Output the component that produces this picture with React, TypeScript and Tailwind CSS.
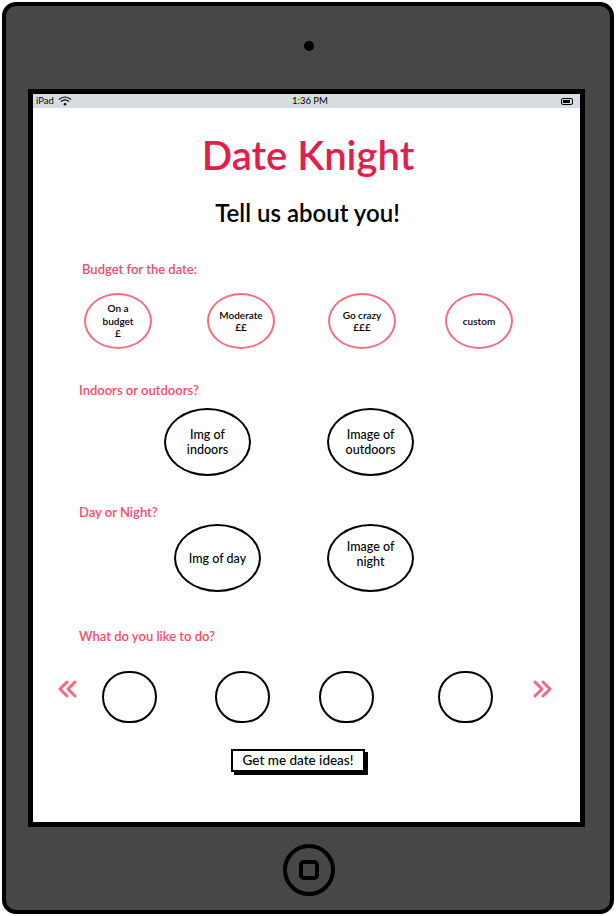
import React from "react";

const font = { fontFamily: "Lato, 'Noto Sans', sans-serif" };

function PinkEllipse({ ml, children }: { ml: string; children: React.ReactNode }) {
  return (
    <div
      className={`${ml} w-[68px] h-[56px] rounded-[50%] border-2 border-[#f2707f] flex items-center justify-center text-center text-[10px] leading-[12.5px] font-semibold text-black shrink-0`}
    >
      {children}
    </div>
  );
}

function BlackEllipse({ ml, children }: { ml: string; children: React.ReactNode }) {
  return (
    <div
      className={`${ml} w-[87px] h-[68px] rounded-[50%] border-2 border-black flex items-center justify-center text-center text-[12.5px] leading-[15px] font-medium text-black shrink-0`}
    >
      {children}
    </div>
  );
}

function Circle({ ml }: { ml: string }) {
  return <div className={`${ml} w-[55px] h-[52px] rounded-full border-2 border-black shrink-0`} />;
}

function Chevrons({ dir }: { dir: "left" | "right" }) {
  const d =
    dir === "left"
      ? "M10 2 L3 9 L10 16 M18 2 L11 9 L18 16"
      : "M2 2 L9 9 L2 16 M10 2 L17 9 L10 16";
  return (
    <svg width="20" height="18" viewBox="0 0 20 18" className="shrink-0">
      <path d={d} fill="none" stroke="#f2687f" strokeWidth="3" strokeLinecap="round" strokeLinejoin="round" />
    </svg>
  );
}

export default function App() {
  return (
    <div className="w-[616px] h-[916px] bg-white overflow-hidden" style={font}>
      <div className="ml-[2px] mt-[2px] w-[612px] h-[912px] rounded-[14px] border-4 border-black bg-[#474747] flex flex-col">
        {/* camera */}
        <div className="self-center ml-[2px] mt-[35px] w-[10px] h-[10px] rounded-full bg-black" />
        {/* screen */}
        <div className="ml-[22px] mt-[38px] w-[557px] h-[738px] border-[5px] border-black bg-white flex flex-col">
          {/* status bar */}
          <div className="h-[14px] bg-[#d6dde0] flex items-center px-[3px] text-[9.5px] text-black relative">
            <span className="mr-[4px]">iPad</span>
            <svg width="14" height="10" viewBox="0 0 14 10">
              <path d="M1 3.5 Q7 -1.5 13 3.5" fill="none" stroke="#000" strokeWidth="1.1" />
              <path d="M3 5.5 Q7 2.3 11 5.5" fill="none" stroke="#000" strokeWidth="1.1" />
              <circle cx="7" cy="8.3" r="1.2" fill="#000" />
            </svg>
            <span className="absolute left-[259px] top-0 leading-[14px]">1:36 PM</span>
            <div className="ml-auto mr-[4px] w-[12px] h-[7px] rounded-[2px] border border-black flex items-center p-[1px]">
              <div className="w-[7px] h-[3px] bg-black" />
            </div>
          </div>

          {/* title */}
          <div className="mt-[23px] h-[48px] text-center text-[40px] leading-[48px] font-semibold text-[#e21f4c] ml-[3px]">
            Date Knight
          </div>
          <div className="mt-[19px] h-[30px] text-center text-[24px] leading-[30px] font-semibold text-black ml-[2px]">
            Tell us about you!
          </div>

          {/* budget */}
          <div className="mt-[33px] ml-[49px] h-[16px] text-[13px] leading-[16px] font-semibold text-[#f24d6c]">
            Budget for the date:
          </div>
          <div className="mt-[16px] flex">
            <PinkEllipse ml="ml-[51px]">
              On a
              <br />
              budget
              <br />£
            </PinkEllipse>
            <PinkEllipse ml="ml-[55px]">
              Moderate
              <br />
              ££
            </PinkEllipse>
            <PinkEllipse ml="ml-[53px]">
              Go crazy
              <br />
              £££
            </PinkEllipse>
            <PinkEllipse ml="ml-[49px]">custom</PinkEllipse>
          </div>

          {/* indoors */}
          <div className="mt-[33px] ml-[46px] h-[16px] text-[13px] leading-[16px] font-semibold text-[#f24d6c]">
            Indoors or outdoors?
          </div>
          <div className="mt-[10px] flex">
            <BlackEllipse ml="ml-[131px]">
              Img of
              <br />
              indoors
            </BlackEllipse>
            <BlackEllipse ml="ml-[76px]">
              Image of
              <br />
              outdoors
            </BlackEllipse>
          </div>

          {/* day night */}
          <div className="mt-[28px] ml-[46px] h-[16px] text-[13px] leading-[16px] font-semibold text-[#f24d6c]">
            Day or Night?
          </div>
          <div className="mt-[4px] flex">
            <BlackEllipse ml="ml-[141px]">Img of day</BlackEllipse>
            <BlackEllipse ml="ml-[66px]">
              <span className="-mt-[8px]">
                Image of
                <br />
                night
              </span>
            </BlackEllipse>
          </div>

          {/* activities */}
          <div className="mt-[36px] ml-[46px] h-[16px] text-[13px] leading-[16px] font-semibold text-[#f24d6c]">
            What do you like to do?
          </div>
          <div className="mt-[27px] flex items-center">
            <div className="ml-[24px] -mt-[17px] flex">
              <Chevrons dir="left" />
            </div>
            <Circle ml="ml-[25px]" />
            <Circle ml="ml-[58px]" />
            <Circle ml="ml-[49px]" />
            <Circle ml="ml-[64px]" />
            <div className="ml-[40px] -mt-[17px] flex">
              <Chevrons dir="right" />
            </div>
          </div>

          {/* button */}
          <div className="mt-[26px] ml-[198px] w-[134px] h-[23px] border-2 border-black bg-white shadow-[3px_3px_0_#000] flex items-center justify-center text-[13.5px] font-medium text-black">
            Get me date ideas!
          </div>
        </div>

        {/* home button */}
        <div className="self-center ml-[2px] mt-[17px] w-[52px] h-[52px] rounded-full border-[4px] border-black flex items-center justify-center">
          <div className="w-[20px] h-[20px] rounded-[5px] border-[4px] border-black" />
        </div>
      </div>
    </div>
  );
}
